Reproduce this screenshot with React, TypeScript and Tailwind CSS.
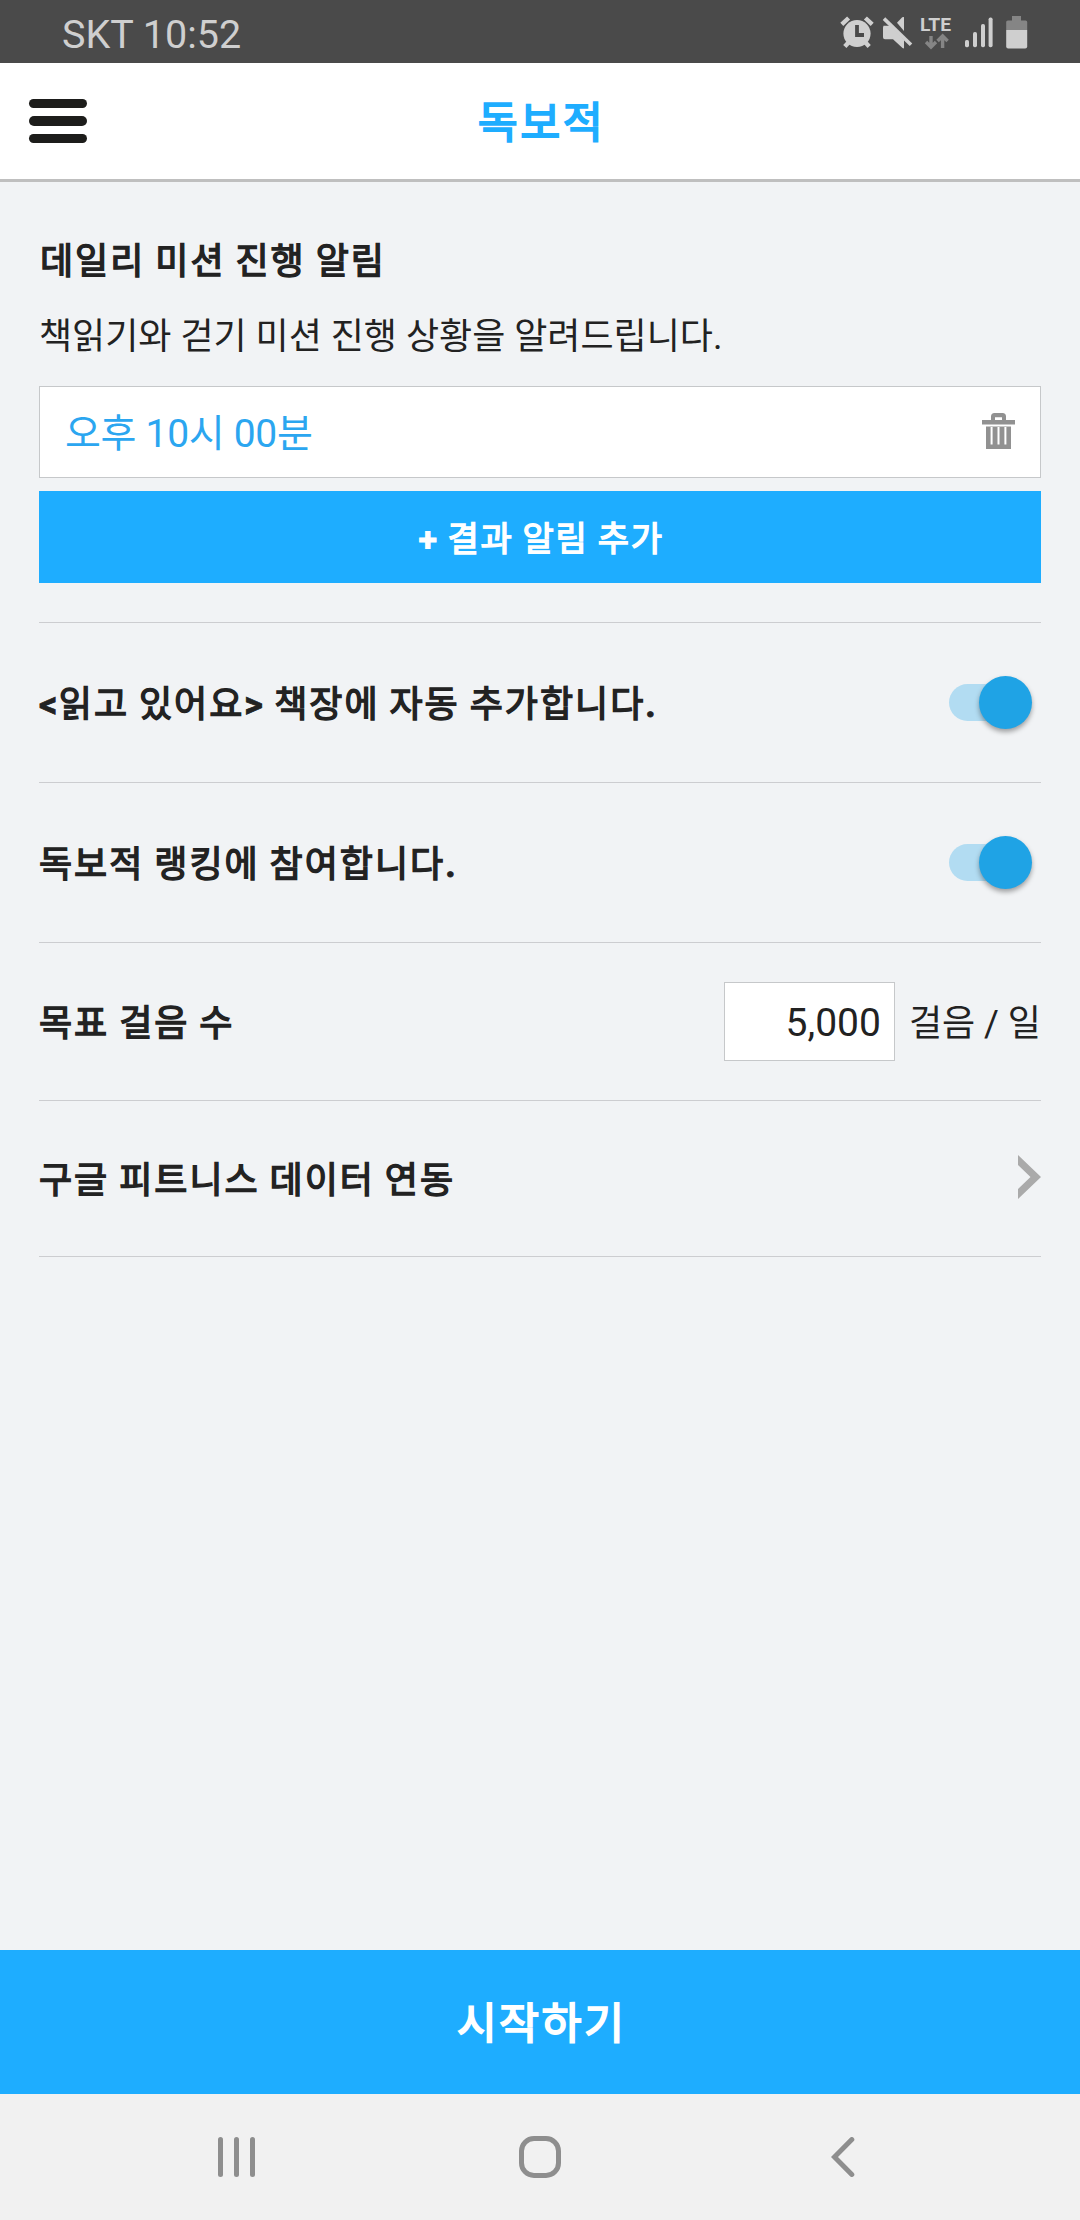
import type { ReactNode } from "react";

function StatusIcons() {
  return (
    <svg className="mt-[3px] overflow-visible" width="188" height="34" viewBox="0 0 188 34" fill="#cfcfcf" aria-hidden="true">
      {/* alarm clock */}
      <circle cx="17" cy="17.5" r="13.6" />
      <path d="M17 9v10h7" fill="none" stroke="#4a4a4a" strokeWidth="3.8" />
      <path d="M1.8 8.3L8.6 2M32.2 8.3L25.4 2" stroke="#cfcfcf" strokeWidth="4.4" />
      <path d="M8.5 26.5L4.8 30.5M25.5 26.5L29.2 30.5" stroke="#cfcfcf" strokeWidth="4.4" />
      {/* muted speaker */}
      <path d="M43.5 9.8H50L64 23.8V32.5L62.5 32L53 23.3H45Q43 23.3 43 21.3V11.5z" />
      <path d="M57 6.8L62.2 1.2L64 1V15z" />
      <path d="M44 2.6L71 28.8" stroke="#cfcfcf" strokeWidth="3.6" />
      {/* mobile data */}
      <text x="80" y="14.7" fontFamily="Roboto, sans-serif" fontWeight="700" fontSize="19" textLength="31" lengthAdjust="spacingAndGlyphs">LTE</text>
      <g fill="none" stroke="#858585" strokeWidth="3.4">
        <path d="M91 20v10.4M86 26l5 5l5-5" />
        <path d="M102.6 32V20.6M97.6 25l5-5l5 5" />
      </g>
      {/* signal */}
      <rect x="125" y="24" width="4" height="7.2" rx="1.6" />
      <rect x="133" y="16" width="4" height="15.2" rx="1.8" />
      <rect x="141" y="8" width="4" height="23.2" rx="1.8" />
      <rect x="148.6" y="1.5" width="4" height="29.7" rx="1.8" />
      {/* battery */}
      <path d="M172 0h9v4.4h4.6q1.6 0 1.6 1.6v8h-21V6q0-1.6 1.6-1.6H172z" fill="#858585" />
      <path d="M166.2 14h21v16.6q0 2-2 2h-17q-2 0-2-2z" />
    </svg>
  );
}

function TrashIcon() {
  return (
    <svg className="-mt-[2px]" width="33" height="37" viewBox="0 0 33 37" fill="#919191" aria-hidden="true">
      <path d="M9 7V3.5Q9 0 12.5 0h8Q24 0 24 3.5V7h9v4.5H0V7zM13 7h7V4.2h-7z" fillRule="evenodd" />
      <path d="M4 13.5h25V36H4zM8.6 14v17.5h2V14zM15.5 14v17.5h2V14zM22.4 14v17.5h2V14z" fillRule="evenodd" />
    </svg>
  );
}

function Toggle() {
  return (
    <button role="switch" aria-checked="true" className="mr-[9px] flex h-[53px] w-[83px] items-center">
      <span className="flex h-[37px] w-[80px] items-center justify-end rounded-full bg-[#b2dcf2]">
        <span className="-mr-[3px] size-[53px] shrink-0 rounded-full bg-[#1fa3e5] shadow-[0_3px_5px_rgba(0,0,0,0.35)]" />
      </span>
    </button>
  );
}

/** Latin punctuation in the headings uses the real bold cut. */
function Mark({ children }: { children: string }) {
  return <b className="font-bold tracking-[1.4px] [-webkit-text-stroke:0.8px]">{children}</b>;
}

function Row({ label, height, children }: { label: ReactNode; height: string; children: ReactNode }) {
  return (
    <div className={`flex items-center justify-between border-t border-[#cccdd0] ${height}`}>
      <span className="pt-[5px] text-[36px] leading-none tracking-[2px] whitespace-nowrap [-webkit-text-stroke:1.4px] [word-spacing:-1px]">
        {label}
      </span>
      {children}
    </div>
  );
}

export default function App() {
  return (
    <div className="flex h-[2220px] w-[1080px] flex-col bg-[#f1f3f5] font-[Roboto,'Noto_Sans_CJK_KR',sans-serif] text-[#222]">
      <div className="flex h-[63px] shrink-0 items-center justify-between bg-[#4a4a4a] pr-[52px] pl-[62px]">
        <span className="pt-[6px] text-[39.5px] leading-none text-[#cfcfcf]">SKT 10:52</span>
        <StatusIcons />
      </div>

      <header className="grid h-[119px] shrink-0 grid-cols-3 items-center border-b-[3px] border-[#bfbfbf] bg-white">
        <button aria-label="메뉴" className="ml-[29px] flex w-[58px] flex-col gap-[8px]">
          <span className="h-[9.4px] rounded-full bg-[#1d1d1b]" />
          <span className="h-[9.4px] rounded-full bg-[#1d1d1b]" />
          <span className="h-[9.4px] rounded-full bg-[#1d1d1b]" />
        </button>
        <h1 className="pt-[5px] pl-[3px] text-center text-[43.5px] leading-none tracking-[2.4px] text-[#1eadff] [-webkit-text-stroke:1.8px]">
          독보적
        </h1>
      </header>

      <main className="flex grow flex-col px-[39px]">
        <h2 className="mt-[60px] ml-px text-[36px] leading-[40px] tracking-[2px] [-webkit-text-stroke:1.4px] [word-spacing:-1px]">
          데일리 미션 진행 알림
        </h2>
        <p className="mt-[35px] text-[36px] leading-[40px]">책읽기와 걷기 미션 진행 상황을 알려드립니다.</p>
        <div className="mt-[29px] flex h-[92px] shrink-0 items-center justify-between border border-[#c6c8ca] bg-white pr-[25px] pl-[25px]">
          <span className="pt-[4px] text-[39px] leading-none tracking-[-0.3px] text-[#2ba6f0]">오후 10시 00분</span>
          <TrashIcon />
        </div>
        <button className="mt-[13px] mb-[39px] h-[92px] shrink-0 bg-[#1eadff] pt-[3px] pl-[2px] text-[34px] leading-none tracking-[1.7px] text-white [-webkit-text-stroke:1.4px] [word-spacing:-1px]">
          <Mark>+</Mark> 결과 알림 추가
        </button>

        <Row
          height="h-[160px]"
          label={
            <>
              <Mark>&lt;</Mark>읽고 있어요<Mark>&gt;</Mark> 책장에 자동 추가합니다<Mark>.</Mark>
            </>
          }
        >
          <Toggle />
        </Row>
        <Row
          height="h-[160px]"
          label={
            <>
              독보적 랭킹에 참여합니다<Mark>.</Mark>
            </>
          }
        >
          <Toggle />
        </Row>
        <Row label="목표 걸음 수" height="h-[158px]">
          <span className="flex items-center gap-[14px] whitespace-nowrap">
            <span className="flex h-[79px] w-[171px] items-center justify-end border border-[#c6c8ca] bg-white pt-[4px] pr-[13px] text-[39px] leading-none">
              5,000
            </span>
            <span className="pt-[4px] text-[36px] leading-none">걸음 / 일</span>
          </span>
        </Row>
        <Row label="구글 피트니스 데이터 연동" height="h-[156px]">
          <svg className="-mt-[3px]" width="23" height="44" viewBox="0 0 23 44" aria-hidden="true">
            <path d="M0 0L23 22L0 44V34L12.5 22L0 10z" fill="#aaa" />
          </svg>
        </Row>
        <div className="border-t border-[#cccdd0]" />
      </main>

      <button className="h-[144px] shrink-0 bg-[#1eadff] pt-[5px] pl-[3px] text-[43.5px] leading-none tracking-[2.4px] text-white [-webkit-text-stroke:1.8px]">
        시작하기
      </button>

      <nav className="flex h-[126px] shrink-0 items-center bg-[#f1f1f1] px-[85px]">
        <span className="flex w-1/3 justify-center gap-[11px]">
          <i className="h-[40px] w-[5px] rounded-full bg-[#8e8e8e]" />
          <i className="h-[40px] w-[5px] rounded-full bg-[#8e8e8e]" />
          <i className="h-[40px] w-[5px] rounded-full bg-[#8e8e8e]" />
        </span>
        <span className="flex w-1/3 justify-center">
          <i className="size-[42px] rounded-[15px] border-[5px] border-[#8e8e8e]" />
        </span>
        <span className="flex w-1/3 justify-center">
          <svg width="24" height="40" viewBox="0 0 24 40" fill="none" aria-hidden="true">
            <path d="M20.8 2.6L3.5 20l17.3 17.4" stroke="#8e8e8e" strokeWidth="5" strokeLinecap="round" />
          </svg>
        </span>
      </nav>
    </div>
  );
}
